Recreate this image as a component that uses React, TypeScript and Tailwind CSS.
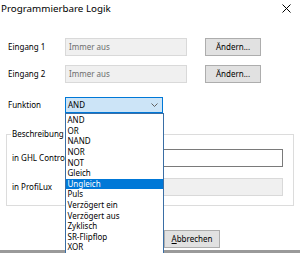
const functions = [
  'AND',
  'OR',
  'NAND',
  'NOR',
  'NOT',
  'Gleich',
  'Ungleich',
  'Puls',
  'Verzögert ein',
  'Verzögert aus',
  'Zyklisch',
  'SR-Flipflop',
  'XOR',
]

function WinButton({ children, className }: { children: React.ReactNode; className?: string }) {
  return (
    <div
      className={
        'flex h-[18px] w-[56px] items-center justify-center border border-[#adadad] bg-[#e1e1e1] text-black ' +
        (className ?? '')
      }
    >
      {children}
    </div>
  )
}

function ReadOnlyField({ value, className }: { value?: string; className?: string }) {
  return (
    <div
      className={
        'flex h-[18px] items-center border border-[#d9d9d9] bg-[#f0f0f0] pl-[3px] text-[#6d6d6d] ' +
        (className ?? '')
      }
    >
      {value}
    </div>
  )
}

export default function App() {
  return (
    <div className="relative h-[253px] w-[300px] overflow-hidden bg-white font-['Noto_Sans',sans-serif] text-[8px] leading-none text-black">
      {/* title bar */}
      <div className="flex h-[17px] items-center justify-between pl-[1px] pr-[9px]">
        <span className="text-[9.8px]">Programmierbare Logik</span>
        <svg width="9" height="9" viewBox="0 0 9 9" fill="none" stroke="#000" strokeWidth="1">
          <line x1="0.5" y1="0.5" x2="8.5" y2="8.5" />
          <line x1="8.5" y1="0.5" x2="0.5" y2="8.5" />
        </svg>
      </div>

      <div className="px-[6px] pt-[21px]">
        <div className="ml-[2px] flex items-center">
          <span className="w-[57px]">Eingang 1</span>
          <ReadOnlyField value="Immer aus" className="w-[122px]" />
          <WinButton className="ml-[18px]">Ändern...</WinButton>
        </div>

        <div className="ml-[2px] mt-[9px] flex items-center">
          <span className="w-[57px]">Eingang 2</span>
          <ReadOnlyField value="Immer aus" className="w-[122px]" />
          <WinButton className="ml-[18px]">Ändern...</WinButton>
        </div>

        <div className="ml-[2px] mt-[14px] flex items-center">
          <span className="w-[57px]">Funktion</span>
          <div className="flex h-[16px] w-[98px] items-center justify-between border border-[#0078d7] bg-[#cce4f7] pl-[2px] pr-[4px]">
            <span>AND</span>
            <svg width="7" height="4" viewBox="0 0 7 4" fill="none" stroke="#606060" strokeWidth="1">
              <polyline points="0.5,0.5 3.5,3.5 6.5,0.5" />
            </svg>
          </div>
        </div>

        {/* Beschreibung group */}
        <div className="relative mt-[21px] h-[72px] w-[288px] border border-[#dcdcdc] pl-[5px] pt-[14px]">
          <span className="absolute left-[4px] top-[-5px] bg-white px-[1px]">Beschreibung</span>
          <div className="flex items-center">
            <span className="w-[78px]">in GHL Control</span>
            <div className="h-[18px] w-[193px] border border-[#7a7a7a] bg-white" />
          </div>
          <div className="mt-[11px] flex items-center">
            <span className="w-[78px]">in ProfiLux</span>
            <ReadOnlyField className="w-[193px]" />
          </div>
        </div>

        <div className="mt-[24px] flex gap-[8px] pl-[94px]">
          <WinButton>OK</WinButton>
          <WinButton>
            <span>
              <span className="underline">A</span>bbrechen
            </span>
          </WinButton>
        </div>
      </div>

      <div className="absolute bottom-0 left-0 h-[3px] w-full bg-[#9a9a9a]" />

      {/* open dropdown list */}
      <div className="absolute left-[65px] top-[113px] w-[99px] border border-[#3a6ea5] bg-white pt-[1px]">
        {functions.map((f) => (
          <div
            key={f}
            className={
              f === 'Ungleich'
                ? 'flex h-[10.6px] items-center bg-[#0078d7] pl-[1.5px] text-white'
                : 'flex h-[10.6px] items-center pl-[1.5px]'
            }
          >
            {f}
          </div>
        ))}
      </div>
    </div>
  )
}
